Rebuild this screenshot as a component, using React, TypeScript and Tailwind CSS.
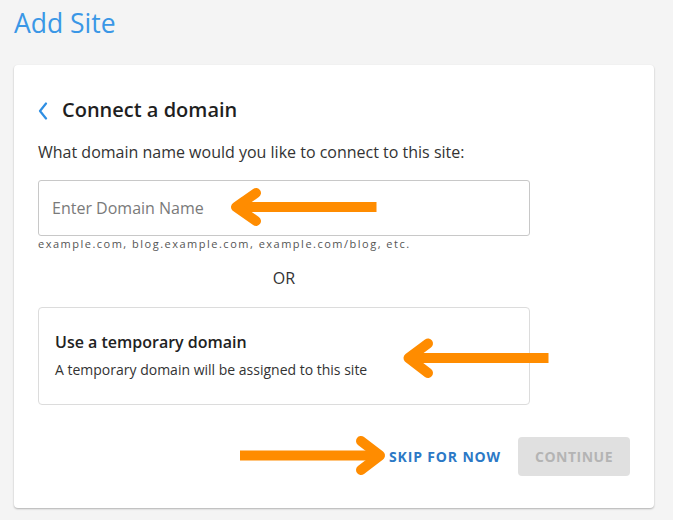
import React from "react";

export default function App() {
  return (
    <div
      className="relative min-h-[520px] w-full bg-[#f4f4f4] pl-[14px] pt-[5px]"
      style={{ fontFamily: '"Open Sans", "Liberation Sans", sans-serif' }}
    >
      <h1 className="text-[26.5px] leading-[37px] font-normal text-[#3a97e6]">Add Site</h1>

      <div className="mt-[23px] w-[640px] rounded-[4px] bg-white pl-[24px] pr-[24px] pt-[31px] pb-[32px] shadow-[0_1px_2px_rgba(0,0,0,0.28)]">
        <div className="flex items-center h-[28px]">
          <svg width="10" height="18" viewBox="0 0 10 18" className="mr-[14px] mt-[2px]">
            <polyline points="8,1.5 2,9 8,16.5" fill="none" stroke="#2f8fe3" strokeWidth="2.2" strokeLinecap="round" strokeLinejoin="round" />
          </svg>
          <h2 className="text-[20px] leading-[28px] font-semibold text-[#1f1f1f]">Connect a domain</h2>
        </div>

        <p className="mt-[16px] text-[16px] leading-[24px] text-[#333333]">
          What domain name would you like to connect to this site:
        </p>

        <div className="w-[492px]">
          <input
            type="text"
            placeholder="Enter Domain Name"
            className="mt-[16px] block h-[56px] w-full rounded-[3px] border border-[#c8c8c8] px-[13px] text-[16px] text-[#333] placeholder:text-[#7a7a7a] outline-none"
          />
          <p className="text-[11px] leading-[16px] tracking-[1.5px] text-[#555555]">
            example.com, blog.example.com, example.com/blog, etc.
          </p>

          <p className="mt-[14px] text-center text-[16px] leading-[24px] text-[#333333]">OR</p>

          <div className="mt-[17px] rounded-[4px] border border-[#dcdcdc] px-[16px] pt-[22px] pb-[24px]">
            <p className="text-[16px] leading-[24px] font-semibold text-[#222222]">Use a temporary domain</p>
            <p className="mt-[6px] text-[14px] leading-[20px] text-[#333333]">
              A temporary domain will be assigned to this site
            </p>
          </div>
        </div>

        <div className="mt-[32px] flex items-center justify-end gap-[17px]">
          <button className="text-[14px] font-bold tracking-[0.85px] text-[#2c79c6]">SKIP FOR NOW</button>
          <button className="h-[39px] rounded-[4px] bg-[#e0e0e0] px-[17px] text-[14px] font-bold tracking-[0.5px] text-[#b4b4b4]">
            CONTINUE
          </button>
        </div>
      </div>

      <svg
        className="pointer-events-none absolute left-0 top-0"
        width="673"
        height="520"
        viewBox="0 0 673 520"
      >
        <g fill="none" stroke="#ff8c00" strokeWidth="10">
          <line x1="240" y1="207" x2="376.5" y2="207" strokeLinecap="butt" />
          <polyline points="256,193 236,207 256,221" strokeLinecap="round" strokeLinejoin="round" />

          <line x1="412" y1="358" x2="548.5" y2="358" strokeLinecap="butt" />
          <polyline points="428,343.5 408.5,358 428,373" strokeLinecap="round" strokeLinejoin="round" />

          <line x1="240" y1="455.5" x2="376" y2="455.5" strokeLinecap="butt" />
          <polyline points="361,441 380,455.5 361,470" strokeLinecap="round" strokeLinejoin="round" />
        </g>
      </svg>
    </div>
  );
}
